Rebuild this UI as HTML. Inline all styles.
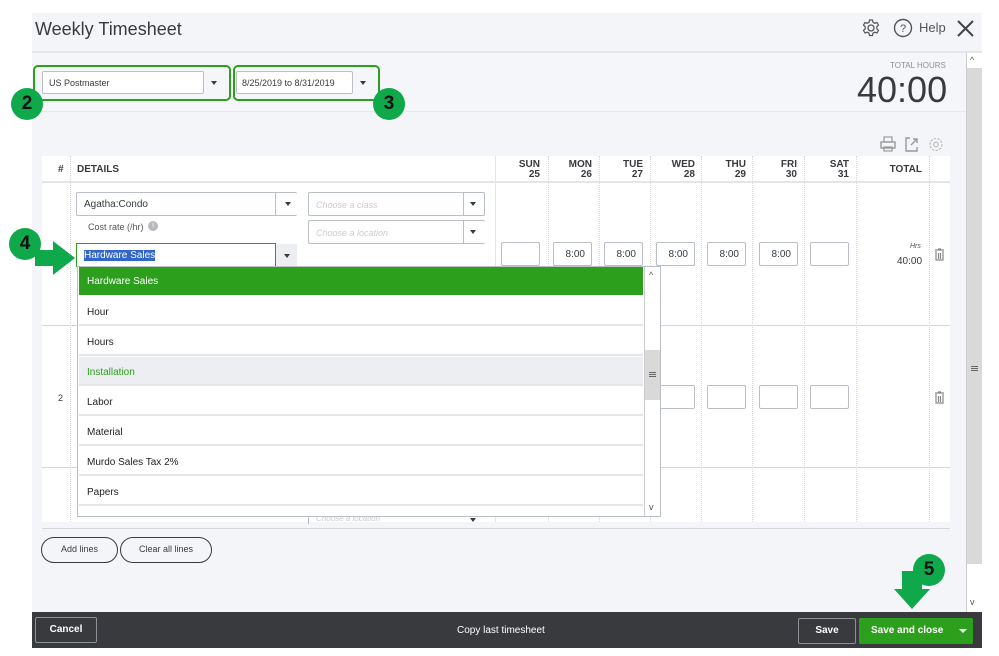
<!DOCTYPE html>
<html><head><meta charset="utf-8"><style>
*{box-sizing:border-box;margin:0;padding:0}
body{width:999px;height:656px;background:#fff;font-family:"Liberation Sans",sans-serif;position:relative;overflow:hidden;color:#393a3d}
.a{position:absolute}
.box{position:absolute;background:#fff;border:1px solid #babec5;border-radius:2px}
.caret{position:absolute;width:0;height:0;border-left:3.5px solid transparent;border-right:3.5px solid transparent;border-top:4px solid #393a3d}
.hd{position:absolute;top:160px;font-size:10px;font-weight:bold;text-align:right;line-height:10px;color:#393a3d}
.vl{position:absolute;width:0;border-left:1px dotted #d4d7dc}
.in{position:absolute;width:39px;height:24px;border:1px solid #babec5;border-radius:2px;background:#fff;font-size:10px;text-align:right;padding:6px 6px 0 0}
.it{position:absolute;left:79px;width:564px;height:29px;background:#fff;border-bottom:2px solid #e3e5e8;font-size:10px;padding:10px 0 0 8px;color:#222}
.circ{position:absolute;width:32px;height:32px;border-radius:50%;background:#0fa84b;color:#111;font-weight:bold;font-size:19px;text-align:center;line-height:32px}
</style></head><body>
<div class="a" style="left:32px;top:13px;width:950px;height:40px;background:#f4f5f8;border-bottom:2px solid #e3e5e8"></div>
<div class="a" style="left:35px;top:19px;font-size:18px;color:#393a3d">Weekly Timesheet</div>
<svg class="a" style="left:861px;top:18px" width="20" height="20" viewBox="0 0 20 20"><circle cx="10" cy="10" r="3" fill="none" stroke="#555" stroke-width="1.3"/><path d="M8.5 2h3l.5 2.3 1.8 1 2.2-.8 1.5 2.6-1.7 1.6v2.1l1.7 1.6-1.5 2.6-2.2-.8-1.8 1-.5 2.3h-3l-.5-2.3-1.8-1-2.2.8-1.5-2.6 1.7-1.6V8.7L2.5 7.1 4 4.5l2.2.8 1.8-1z" fill="none" stroke="#555" stroke-width="1.2"/></svg>
<svg class="a" style="left:893px;top:18px" width="20" height="20" viewBox="0 0 20 20"><circle cx="10" cy="10" r="8.5" fill="none" stroke="#555" stroke-width="1.4"/><text x="10" y="14" font-size="11" text-anchor="middle" fill="#555" font-family="Liberation Sans">?</text></svg>
<div class="a" style="left:919px;top:20px;font-size:13px;color:#555">Help</div>
<svg class="a" style="left:956px;top:19px" width="19" height="19"><path d="M2 2L17 17M17 2L2 17" stroke="#444" stroke-width="2"/></svg>
<div class="a" style="left:32px;top:53px;width:934px;height:559px;background:#f4f5f8"></div>
<div class="a" style="left:32px;top:53px;width:934px;height:59px;background:#f5f6f9;border-bottom:1px solid #e3e8ef"></div>
<div class="a" style="left:966px;top:53px;width:16px;height:559px;background:#fff;border-left:1px solid #ccc"></div>
<div class="a" style="left:967px;top:68px;width:15px;height:496px;background:#d9d9d9"></div>
<div class="a" style="left:970px;top:55px;font-size:9px;color:#555">^</div>
<div class="a" style="left:970px;top:597px;font-size:9px;color:#555">v</div>
<div class="a" style="left:971px;top:366px;width:7px;height:1px;background:#666;box-shadow:0 2px 0 #666,0 4px 0 #666"></div>
<div class="a" style="left:33px;top:65px;width:198px;height:36px;border:2px solid #2ca01c;border-radius:5px"></div>
<div class="box" style="left:42px;top:71px;width:162px;height:23px;font-size:9px;padding:6px 0 0 6px">US Postmaster</div>
<div class="caret" style="left:211px;top:81px"></div>
<div class="a" style="left:233px;top:65px;width:147px;height:36px;border:2px solid #2ca01c;border-radius:5px"></div>
<div class="box" style="left:236px;top:71px;width:117px;height:23px;font-size:9px;padding:6px 0 0 5px;border-right:1px solid #babec5">8/25/2019 to 8/31/2019</div>
<div class="caret" style="left:360px;top:81px"></div>
<div class="circ" style="left:11px;top:88px">2</div>
<div class="circ" style="left:373px;top:88px">3</div>
<div class="a" style="left:890px;top:61px;font-size:8px;color:#8d9096">TOTAL HOURS</div>
<div class="a" style="left:857px;top:69px;font-size:36px;color:#393a3d">40:00</div>
<svg class="a" style="left:880px;top:136px" width="64" height="17"><rect x="1" y="6" width="14" height="6" fill="none" stroke="#999" stroke-width="1.4"/><rect x="4" y="1" width="8" height="5" fill="none" stroke="#999" stroke-width="1.2"/><rect x="4" y="11" width="8" height="4" fill="none" stroke="#999" stroke-width="1.2"/><path d="M30 2h-4v13h11v-4M31 9l6-6M33 3h4v4" fill="none" stroke="#999" stroke-width="1.4"/><circle cx="56" cy="8.5" r="2.3" fill="none" stroke="#bbb" stroke-width="1.1"/><circle cx="56" cy="8.5" r="6" fill="none" stroke="#bbb" stroke-width="1.1" stroke-dasharray="2.4 1.3"/></svg>
<div class="a" style="left:42px;top:156px;width:908px;height:366px;background:#fff"></div>
<div class="a" style="left:42px;top:181px;width:908px;height:2px;background:#e3e5e8"></div>
<div class="a" style="left:42px;top:325px;width:908px;height:1px;background:#d4d7dc"></div>
<div class="a" style="left:42px;top:467px;width:908px;height:1px;background:#d4d7dc"></div>
<div class="a" style="left:42px;top:528px;width:908px;height:1px;background:#d4d7dc"></div>
<div class="vl" style="left:70px;top:156px;height:366px"></div>
<div class="a" style="left:495px;top:156px;width:1px;height:366px;background:#e3e5e8"></div>
<div class="vl" style="left:548px;top:156px;height:366px"></div>
<div class="vl" style="left:599px;top:156px;height:366px"></div>
<div class="vl" style="left:650px;top:156px;height:366px"></div>
<div class="vl" style="left:701px;top:156px;height:366px"></div>
<div class="vl" style="left:752px;top:156px;height:366px"></div>
<div class="vl" style="left:804px;top:156px;height:366px"></div>
<div class="vl" style="left:856px;top:156px;height:366px"></div>
<div class="vl" style="left:929px;top:156px;height:366px"></div>
<div class="hd" style="left:58px;top:165px">#</div>
<div class="hd" style="left:77px;top:165px">DETAILS</div>
<div class="hd" style="left:510px;width:30px">SUN<br>25</div>
<div class="hd" style="left:560px;width:32px">MON<br>26</div>
<div class="hd" style="left:612px;width:31px">TUE<br>27</div>
<div class="hd" style="left:663px;width:32px">WED<br>28</div>
<div class="hd" style="left:714px;width:32px">THU<br>29</div>
<div class="hd" style="left:765px;width:32px">FRI<br>30</div>
<div class="hd" style="left:817px;width:32px">SAT<br>31</div>
<div class="hd" style="left:880px;top:165px;width:42px">TOTAL</div>
<div class="box" style="left:76px;top:192px;width:221px;height:24px;font-size:10px;padding:6px 0 0 7px;border-right:none"><span>Agatha:Condo</span><div class="a" style="left:198px;top:-1px;width:1px;height:24px;background:#babec5"></div></div>
<div class="caret" style="left:285px;top:202px"></div>
<div class="a" style="left:88px;top:222px;font-size:9px;color:#555">Cost rate (/hr)</div>
<div class="a" style="left:148px;top:221px;width:10px;height:10px;border-radius:50%;background:#b7b9bc;color:#fff;font-size:7px;text-align:center;line-height:10px">i</div>
<div class="box" style="left:308px;top:192px;width:177px;height:24px;font-size:9px;padding:7px 0 0 7px;color:#ccc;font-style:italic">Choose a class<div class="a" style="left:154px;top:-1px;width:1px;height:24px;background:#babec5"></div></div>
<div class="caret" style="left:470px;top:202px"></div>
<div class="box" style="left:308px;top:220px;width:177px;height:24px;font-size:9px;padding:7px 0 0 7px;color:#ccc;font-style:italic;border-right:none">Choose a location<div class="a" style="left:154px;top:-1px;width:1px;height:24px;background:#babec5"></div></div>
<div class="caret" style="left:470px;top:230px"></div>
<div class="a" style="left:76px;top:243px;width:200px;height:24px;background:#fff;border:1px solid #2ca01c;font-size:10px;padding:6px 0 0 7px"><span style="background:#3166c8;color:#fff">Hardware Sales</span></div>
<div class="a" style="left:276px;top:244px;width:21px;height:22px;background:#eceef1"></div>
<div class="caret" style="left:284px;top:254px"></div>
<div class="in" style="left:501px;top:242px"></div>
<div class="in" style="left:553px;top:242px">8:00</div>
<div class="in" style="left:604px;top:242px">8:00</div>
<div class="in" style="left:656px;top:242px">8:00</div>
<div class="in" style="left:707px;top:242px">8:00</div>
<div class="in" style="left:759px;top:242px">8:00</div>
<div class="in" style="left:810px;top:242px"></div>
<div class="a" style="left:910px;top:243px;font-size:7px;font-style:italic;color:#555">Hrs</div>
<div class="a" style="left:897px;top:256px;font-size:10px">40:00</div>
<svg class="a" style="left:934px;top:248px" width="11" height="13"><path d="M1 2h9M4 1h3M2 3v9h7V3M4.5 5v6M6.5 5v6" stroke="#888" stroke-width="1.2" fill="none"/></svg>
<div class="a" style="left:58px;top:393px;font-size:9px">2</div>
<div class="in" style="left:656px;top:385px"></div>
<div class="in" style="left:707px;top:385px"></div>
<div class="in" style="left:759px;top:385px"></div>
<div class="in" style="left:810px;top:385px"></div>
<svg class="a" style="left:934px;top:391px" width="11" height="13"><path d="M1 2h9M4 1h3M2 3v9h7V3M4.5 5v6M6.5 5v6" stroke="#888" stroke-width="1.2" fill="none"/></svg>
<div class="a" style="left:308px;top:514px;width:177px;height:10px;border-left:1px solid #babec5;font-size:8px;color:#ccc;padding-left:7px;line-height:10px;font-style:italic">Choose a location</div>
<div class="caret" style="left:470px;top:518px"></div>
<div class="a" style="left:77px;top:266px;width:584px;height:251px;background:#fff;border:1px solid #babec5"></div>
<div class="a" style="left:79px;top:267px;width:564px;height:28px;background:#2ca01c;color:#fff;font-size:10px;padding:9px 0 0 8px">Hardware Sales</div>
<div class="it" style="top:297px">Hour</div>
<div class="it" style="top:327px">Hours</div>
<div class="it" style="top:357px;background:#eceef1;color:#2ca01c">Installation</div>
<div class="it" style="top:387px">Labor</div>
<div class="it" style="top:417px">Material</div>
<div class="it" style="top:447px">Murdo Sales Tax 2%</div>
<div class="it" style="top:477px">Papers</div>
<div class="a" style="left:644px;top:267px;width:16px;height:249px;border-left:1px solid #ccc;background:#fff"></div>
<div class="a" style="left:645px;top:350px;width:15px;height:50px;background:#d9d9d9"></div>
<div class="a" style="left:649px;top:270px;font-size:9px;color:#555">^</div>
<div class="a" style="left:649px;top:502px;font-size:9px;color:#555">v</div>
<div class="a" style="left:649px;top:372px;width:7px;height:1px;background:#666;box-shadow:0 2px 0 #666,0 4px 0 #666"></div>
<svg class="a" style="left:33px;top:240px" width="44" height="36"><path d="M2 10h18V1l22 17-22 17v-9H2z" fill="#0fa84b"/></svg>
<div class="circ" style="left:9px;top:228px">4</div>
<div class="a" style="left:41px;top:537px;width:77px;height:26px;border:1.5px solid #393a3d;border-radius:14px;font-size:9px;text-align:center;line-height:23px">Add lines</div>
<div class="a" style="left:120px;top:537px;width:92px;height:26px;border:1.5px solid #393a3d;border-radius:14px;font-size:9px;text-align:center;line-height:23px">Clear all lines</div>
<svg class="a" style="left:893px;top:570px" width="38" height="40"><path d="M9 1h20v18h8L19 39 1 19h8z" fill="#0fa84b"/></svg>
<div class="circ" style="left:913px;top:554px">5</div>
<div class="a" style="left:32px;top:612px;width:950px;height:36px;background:#393a3d"></div>
<div class="a" style="left:35px;top:617px;width:62px;height:26px;border:1px solid #8d9096;border-radius:2px;color:#fff;font-size:10px;text-align:center;line-height:24px;font-weight:bold">Cancel</div>
<div class="a" style="left:457px;top:625px;color:#fff;font-size:10px">Copy last timesheet</div>
<div class="a" style="left:798px;top:618px;width:58px;height:26px;border:1px solid #8d9096;border-radius:2px;color:#fff;font-size:10px;text-align:center;line-height:24px;font-weight:bold">Save</div>
<div class="a" style="left:859px;top:618px;width:114px;height:26px;background:#2ca01c;border-radius:2px;color:#fff;font-size:10px;line-height:26px;padding-left:12px;font-weight:bold">Save and close</div>
<div class="a" style="left:959px;top:629px;width:0;height:0;border-left:4px solid transparent;border-right:4px solid transparent;border-top:4px solid #fff"></div>
</body></html>
